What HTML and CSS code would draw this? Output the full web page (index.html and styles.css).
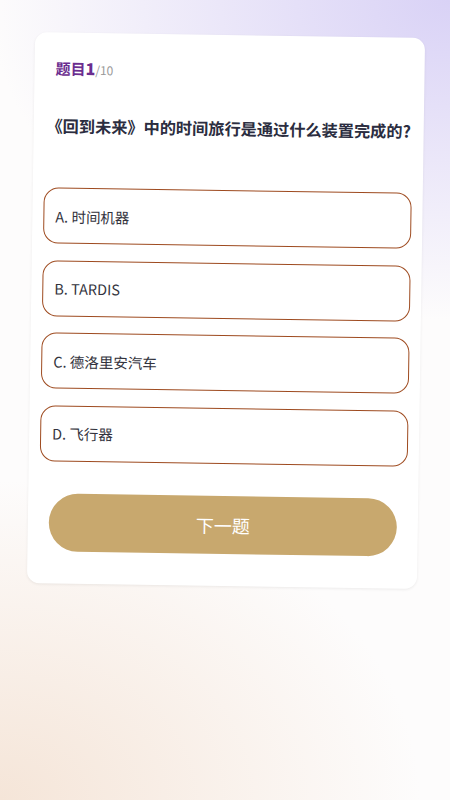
FILE: index.html
```html
<!DOCTYPE html>
<html lang="zh-CN">

<head>
    <meta charset="UTF-8">
    <meta name="viewport" content="width=device-width, initial-scale=1.0">
    <title>趣味问答</title>
    <link rel="stylesheet" href="styles.css">
</head>

<body>
    <div class="quiz-card">
        <div class="quiz-header">
            <span class="q-label">题目<b>1</b></span><span class="q-total">/10</span>
        </div>
        <h2 class="question">《回到未来》中的时间旅行是通过什么装置完成的?</h2>
        <!-- Options -->
        <div class="options">
            <div class="option">A. 时间机器</div>
            <div class="option">B. TARDIS</div>
            <div class="option">C. 德洛里安汽车</div>
            <div class="option">D. 飞行器</div>
        </div>
        <button class="next-btn">下一题</button>
    </div>
</body>

</html>
```

FILE: styles.css
```css
* {
    margin: 0;
    padding: 0;
    box-sizing: border-box;
}

body {
    width: 450px;
    height: 800px;
    overflow: hidden;
    font-family: "Noto Sans CJK SC", "Noto Sans", sans-serif;
    background:
        radial-gradient(ellipse 460px 320px at 100% 0%, #d9d2f6 0%, rgba(217, 210, 246, 0) 100%),
        radial-gradient(ellipse 420px 320px at 0% 100%, #f5e5d8 0%, rgba(245, 229, 216, 0) 100%),
        #fdfcfc;
    padding-top: 35px;
}

.quiz-card {
    width: 390px;
    margin: 0 0 0 31px;
    background-color: #fff;
    border-radius: 12px;
    padding: 24px 11px 32px;
    box-shadow: 0 1px 3px rgba(0, 0, 0, 0.07);
    transform: rotate(0.85deg);
}

.quiz-header {
    padding-left: 10px;
    line-height: 22px;
    height: 22px;
}

.q-label {
    font-size: 15px;
    font-weight: 700;
    color: #6b2d8f;
}

.q-label b {
    font-size: 16px;
}

.q-total {
    font-size: 12px;
    color: #9a9a9a;
}

.question {
    margin-top: 35px;
    font-size: 16.2px;
    line-height: 24px;
    font-weight: 700;
    color: #2b2d40;
    text-align: center;
    white-space: nowrap;
}

.options {
    margin-top: 50px;
    display: flex;
    flex-direction: column;
    gap: 16.5px;
}

.option {
    height: 56px;
    border: 1.6px solid #9e4b20;
    border-radius: 15px;
    padding: 0 11px;
    display: flex;
    align-items: center;
    font-size: 14.5px;
    color: #33333d;
}

.next-btn {
    display: block;
    width: 348px;
    height: 58px;
    margin: 32px auto 0;
    border: none;
    border-radius: 29px;
    background-color: #c8a86e;
    color: #fff;
    font-family: inherit;
    font-size: 18px;
    cursor: pointer;
}
```
